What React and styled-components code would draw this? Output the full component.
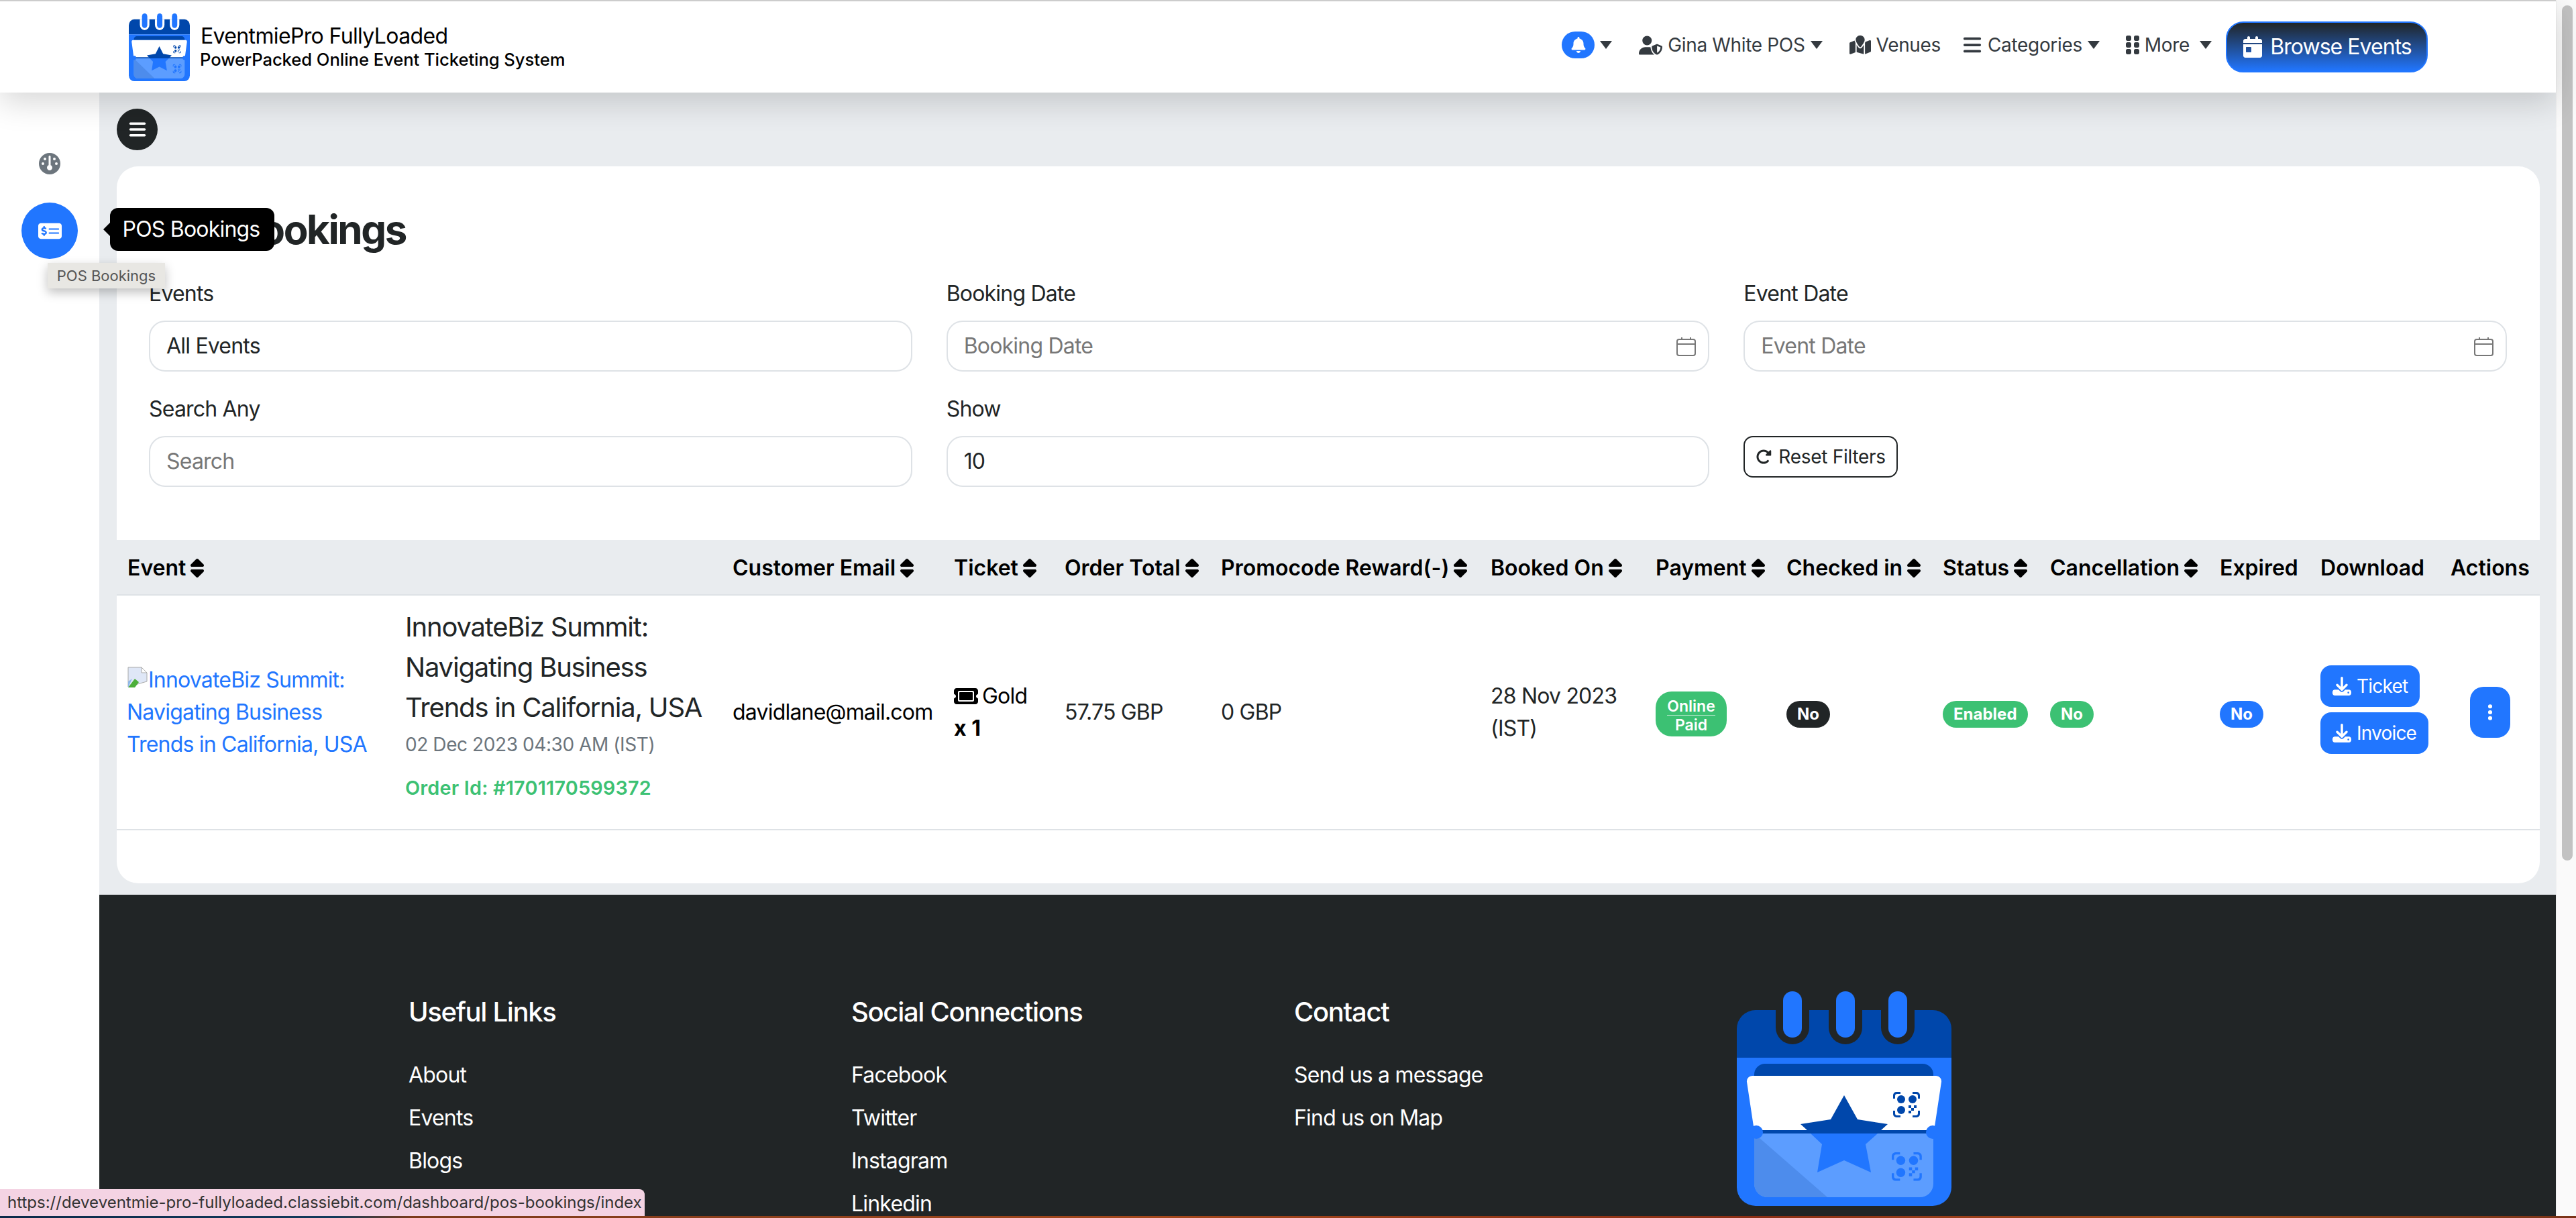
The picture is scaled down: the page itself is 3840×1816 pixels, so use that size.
import React from 'react';
import styled, { createGlobalStyle } from 'styled-components';
import {
  FaBars,
  FaBell,
  FaCalendarDay,
  FaDownload,
  FaEllipsisVertical,
  FaGauge,
  FaGripVertical,
  FaMapLocation,
  FaMoneyCheckDollar,
  FaRotateRight,
  FaSort,
  FaTicket,
  FaUserShield,
} from 'react-icons/fa6';

const BLUE = '#2176ff';
const NAVY = '#0047ab';
const GREEN = '#3cc173';
const DARK = '#212526';

const GlobalStyle = createGlobalStyle`
  html, body { margin: 0; padding: 0; height: 100%; overflow: hidden; }
  body { font-family: Inter, "Liberation Sans", sans-serif; font-size: 32px; line-height: 48px; letter-spacing: -0.025em; color: ${DARK}; }
  * { box-sizing: border-box; }
`;

const Page = styled.div`
  position: relative;
  display: flex;
  height: 1816px;
  overflow: hidden;
  background: #fff;
`;
const Content = styled.div`
  flex: 1;
  min-width: 0;
  display: flex;
  flex-direction: column;
`;
const ScrollLane = styled.div`
  width: 30px;
  padding: 8px 6px 0 8px;
  background: #fafafa;
  border-left: 1px solid #f0f0f0;
`;
const ScrollThumb = styled.div`
  width: 16px;
  height: 1275px;
  border-radius: 8px;
  background: #c2c2c2;
`;

const Navbar = styled.header`
  position: relative;
  z-index: 2;
  flex: none;
  height: 138px;
  padding: 0 191px 0 192px;
  display: flex;
  align-items: center;
  background: #fff;
  border-top: 2px solid #ccc;
  box-shadow: 0 14px 44px rgba(0, 0, 0, 0.16);
`;
const Brand = styled.div`
  display: flex;
  align-items: center;
  gap: 16px;
  color: #000;
`;
const BrandText = styled.div`
  display: flex;
  flex-direction: column;
  padding-top: 2px;
`;
const BrandName = styled.span`
  font-size: 32px;
  line-height: 36px;
  letter-spacing: -0.02em;
`;
const BrandTag = styled.span`
  font-size: 25.6px;
  line-height: 34px;
  font-weight: 500;
  letter-spacing: -0.002em;
  margin-left: -1px;
`;
const NavMenu = styled.nav`
  margin-left: auto;
  display: flex;
  align-items: center;
`;
const NavItem = styled.a`
  display: flex;
  align-items: center;
  gap: 8px;
  margin-left: ${(p) => p.$ml || 0}px;
  margin-top: -6px;
  font-size: 28px;
  line-height: 40px;
  letter-spacing: -0.012em;
  color: #343a40;
  svg { font-size: ${(p) => p.$icon || 28}px; flex: none; }
`;
const GripIcon = styled(FaGripVertical)`
  width: 20px;
  height: 32px;
`;
const Caret = styled.i`
  display: block;
  width: 0;
  height: 0;
  margin-left: ${(p) => p.$ml || 0}px;
  border-top: 12px solid #343a40;
  border-left: 9px solid transparent;
  border-right: 9px solid transparent;
`;
const BellPill = styled.span`
  width: 49px;
  height: 40px;
  border-radius: 20px;
  display: flex;
  align-items: center;
  justify-content: center;
  color: #fff;
  background: ${BLUE};
  svg { font-size: 24px; }
`;
const BrowseButton = styled.a`
  width: 301px;
  height: 76px;
  margin-left: 21px;
  display: flex;
  align-items: center;
  justify-content: center;
  gap: 10px;
  border: 2px solid ${BLUE};
  border-radius: 26px;
  color: #fff;
  font-size: 32px;
  letter-spacing: -0.03em;
  svg { font-size: 32px; }
  background: linear-gradient(180deg, ${DARK}, ${BLUE});
`;

const Body = styled.div`
  flex: 1;
  min-height: 0;
  display: flex;
`;
const Sidebar = styled.aside`
  flex: none;
  width: 148px;
  padding-top: 64px;
  display: flex;
  flex-direction: column;
  align-items: center;
  background: #fff;
`;
const SideIcon = styled.a`
  width: 84px;
  height: 84px;
  border-radius: 50%;
  display: flex;
  align-items: center;
  justify-content: center;
  font-size: ${(p) => (p.$active ? 35 : 32)}px;
  color: ${(p) => (p.$active ? '#fff' : '#6c757d')};
  background: ${(p) => (p.$active ? BLUE : 'transparent')};
  & + & { margin-top: 16px; }
`;
const Column = styled.div`
  flex: 1;
  min-width: 0;
  display: flex;
  flex-direction: column;
`;
const Main = styled.main`
  flex: none;
  padding: 24px 24px 17px 26px;
  background: #e9ecef;
`;
const MenuToggle = styled.button`
  display: flex;
  align-items: center;
  justify-content: center;
  width: 61px;
  height: 62px;
  margin-bottom: 24px;
  padding: 0;
  border: 0;
  border-radius: 50%;
  background: ${DARK};
  color: #fff;
  font-size: 28px;
`;
const Card = styled.section`
  background: #fff;
  border-radius: 32px;
  overflow: hidden;
  padding-bottom: 79px;
`;
const CardHead = styled.div`
  padding: 56px 49px 79px 48px;
`;
const Title = styled.h1`
  margin: 0 0 34px;
  font-size: 60px;
  line-height: 76px;
  font-weight: 700;
  letter-spacing: -2.4px;
`;
const FilterGrid = styled.div`
  display: grid;
  grid-template-columns: repeat(3, 1fr);
  column-gap: 51px;
  row-gap: 32px;
`;
const Label = styled.div`
  height: 48px;
  margin-bottom: 16px;
`;
const InputBox = styled.div`
  height: 76px;
  display: flex;
  align-items: center;
  padding: 0 18px 0 24px;
  border: 2px solid #dee2e6;
  border-radius: 24px;
  background: #fff;
`;
const Field = styled.input`
  flex: 1;
  min-width: 0;
  border: 0;
  outline: 0;
  padding: 0;
  background: none;
  font: inherit;
  letter-spacing: inherit;
  color: ${DARK};
  &::placeholder { color: #777; opacity: 1; }
`;
const ResetButton = styled.button`
  display: flex;
  align-items: center;
  gap: 10px;
  width: 230px;
  height: 62px;
  margin-top: 64px;
  padding: 0 16px;
  border: 2px solid ${DARK};
  border-radius: 14px;
  background: #fff;
  color: ${DARK};
  font: inherit;
  font-size: 28px;
  letter-spacing: -0.01em;
  white-space: nowrap;
  svg { font-size: 24px; flex: none; }
`;

const Table = styled.table`
  width: 100%;
  table-layout: fixed;
  border-collapse: collapse;
`;
const Th = styled.th`
  height: 82px;
  padding: 2px 0 0 16px;
  text-align: left;
  font-weight: 600;
  letter-spacing: 0;
  white-space: nowrap;
  color: #000;
  background: #e9ecef;
  border-bottom: 2px solid #dee2e6;
  svg { width: 20px; height: 32px; margin-left: 7px; vertical-align: -5px; }
`;
const Td = styled.td`
  height: 350px;
  padding: 0 16px;
  vertical-align: middle;
  color: ${(p) => p.$color || DARK};
  text-align: ${(p) => p.$align || 'left'};
  border-bottom: 2px solid #dee2e6;
`;
const EventLink = styled.a`
  display: block;
  max-width: 372px;
  margin-left: -1px;
  color: ${BLUE};
  svg { width: 32px; height: 32px; vertical-align: -1px; }
`;
const EventInfo = styled.div`
  padding-bottom: 24px;
`;
const EventName = styled.div`
  font-size: 40px;
  line-height: 60px;
  letter-spacing: -0.03em;
  color: ${DARK};
`;
const EventDate = styled.div`
  margin-top: 4px;
  font-size: 28px;
  line-height: 42px;
  letter-spacing: -0.015em;
  color: #6c757d;
`;
const OrderId = styled.div`
  margin-top: 24px;
  font-size: 28.8px;
  line-height: 40px;
  font-weight: 600;
  letter-spacing: 0.2px;
  color: ${GREEN};
`;
const TicketName = styled.div`
  display: flex;
  align-items: center;
  gap: 6px;
  color: #000;
  svg { font-size: 36px; flex: none; }
`;
const TicketQty = styled.div`
  font-weight: 700;
  letter-spacing: 0;
  color: #000;
`;
const Badge = styled.span`
  display: inline-flex;
  align-items: center;
  height: 40px;
  margin-top: 6px;
  padding: 0 16px;
  border-radius: 20px;
  font-size: 24px;
  line-height: 1;
  font-weight: 700;
  letter-spacing: 0;
  color: #fff;
  background: ${(p) => p.$bg};
`;
const PayBadge = styled.span`
  display: inline-flex;
  flex-direction: column;
  align-items: center;
  width: 106px;
  height: 67px;
  padding-top: 9px;
  border-radius: 24px;
  font-size: 23px;
  line-height: 26px;
  font-weight: 600;
  letter-spacing: 0;
  color: #fff;
  background: ${GREEN};
  b { font-weight: 600; border-bottom: 1px solid rgba(255, 255, 255, 0.6); }
  span { margin-top: 1px; }
`;
const ButtonStack = styled.div`
  display: flex;
  flex-direction: column;
  align-items: flex-start;
  gap: 8px;
  margin-bottom: 8px;
`;
const DownloadButton = styled.a`
  display: flex;
  align-items: center;
  gap: 8px;
  height: 62px;
  padding: 0 18px;
  border-radius: 16px;
  color: #fff;
  background: ${BLUE};
  font-size: 28px;
  svg { font-size: 28px; }
`;
const ActionButton = styled.button`
  display: inline-flex;
  align-items: center;
  justify-content: center;
  width: 60px;
  height: 76px;
  padding: 0;
  border: 0;
  border-radius: 20px;
  color: #fff;
  background: ${BLUE};
  font-size: 28px;
`;

const Footer = styled.footer`
  flex: 1;
  min-height: 0;
  padding: 144px 0 0 461px;
  display: grid;
  grid-template-columns: repeat(4, 660px);
  align-content: start;
  color: #fff;
  background: ${DARK};
`;
const FooterCol = styled.div`
  display: flex;
  flex-direction: column;
`;
const FooterHead = styled.h5`
  margin: 7px 0 46px;
  font-size: 40px;
  line-height: 48px;
  font-weight: 500;
  letter-spacing: -0.033em;
`;
const FooterLink = styled.a`
  height: 64px;
  line-height: 48px;
  color: #fff;
`;

const Tooltip = styled.div`
  position: absolute;
  left: 164px;
  top: 310px;
  z-index: 5;
  width: 245px;
  height: 64px;
  padding-right: 3px;
  display: flex;
  align-items: center;
  justify-content: center;
  border-radius: 12px;
  color: #fff;
  background: #000;
  font-size: 32px;
  &::before {
    content: '';
    position: absolute;
    left: -10px;
    top: 22px;
    border-top: 10px solid transparent;
    border-bottom: 10px solid transparent;
    border-right: 10px solid #000;
  }
`;
const NativeTip = styled.div`
  position: absolute;
  left: 71px;
  top: 392px;
  z-index: 6;
  width: 175px;
  height: 38px;
  display: flex;
  align-items: center;
  justify-content: center;
  font-size: 22px;
  letter-spacing: 0;
  color: #555;
  background: #e8e7e3;
  box-shadow: 0 6px 16px rgba(0, 0, 0, 0.25);
`;
const StatusBar = styled.div`
  position: absolute;
  left: 0;
  bottom: 3px;
  z-index: 7;
  width: 961px;
  height: 40px;
  padding-left: 11px;
  display: flex;
  align-items: center;
  white-space: nowrap;
  font-size: 24px;
  letter-spacing: 0;
  color: #333;
  background: #f4d3e3;
  border-top-right-radius: 8px;
`;
const WallpaperEdge = styled.div`
  position: absolute;
  left: 0;
  right: 0;
  bottom: 0;
  z-index: 8;
  height: 3px;
  background: linear-gradient(90deg, #0d2a4a 0%, #123a5c 13%, #7c3a1c 16%, #a4481c 45%, #8c2f16 68%, #a9501e 85%, #7a3318 100%);
`;

function QrMark({ x, y, s, fill }) {
  return (
    <g transform={`translate(${x} ${y}) scale(${s})`} fill={fill}>
      <path d="M0 10V5a5 5 0 0 1 5-5h6v3H6a3 3 0 0 0-3 3v4zM40 10V5a5 5 0 0 0-5-5h-6v3h5a3 3 0 0 1 3 3v4zM0 28v5a5 5 0 0 0 5 5h6v-3H6a3 3 0 0 1-3-3v-4zM40 28v5a5 5 0 0 1-5 5h-6v-3h5a3 3 0 0 0 3-3v-4z" />
      <circle cx="12" cy="11" r="6" />
      <circle cx="29" cy="11" r="6" />
      <circle cx="12" cy="27" r="6" />
      <path d="M23 20h4v4h-4zM31 20h4v4h-4zM27 24h4v4h-4zM23 28h4v4h-4z" />
    </g>
  );
}

function Logo({ width, height, hole }) {
  return (
    <svg width={width} height={height} viewBox="0 0 320 320" preserveAspectRatio="none">
      <path d="M0 99V56a28 28 0 0 1 28-28h264a28 28 0 0 1 28 28v43z" fill={NAVY} />
      <path d="M0 99h320v193a28 28 0 0 1-28 28H28a28 28 0 0 1-28-28z" fill={BLUE} />
      {[83, 162, 240].map((cx) => (
        <g key={cx}>
          <path d={`M${cx - 25} 28v26a25 25 0 0 0 50 0V28z`} fill={hole} />
          <rect x={cx - 14} y="0" width="28" height="69" rx="14" fill={BLUE} />
        </g>
      ))}
      <path d="M26 126v-2a16 16 0 0 1 16-16h235a16 16 0 0 1 16 16v2z" fill={NAVY} />
      <path d="M23 126h274a8 8 0 0 1 8 9l-11 73H26L15 135a8 8 0 0 1 8-9z" fill="#fff" />
      <path d="M26 212h267v75a20 20 0 0 1-20 20H46a20 20 0 0 1-20-20z" fill="#5c9dff" />
      <path d="M26 212l109 95H46a20 20 0 0 1-20-20z" fill="#4d8cec" />
      <rect x="26" y="207" width="267" height="5" fill={NAVY} />
      <path d="M160 155l20 36 45 7-11 10v4H106v-4l-11-10 45-7z" fill={NAVY} />
      <path d="M110 212h100l-18 16 8 42-40-18-40 18 7-42z" fill={BLUE} />
      <circle cx="29" cy="210" r="10" fill={BLUE} />
      <circle cx="292" cy="210" r="10" fill={BLUE} />
      <QrMark x={233} y={150} s={1} fill={NAVY} />
      <QrMark x={231} y={240} s={1.12} fill={BLUE} />
    </svg>
  );
}

const BrokenImage = () => (
  <svg viewBox="0 0 32 32">
    <path d="M2 1h20l8 8v13L2 30z" fill="#dfe7f7" stroke="#a9a9a9" strokeWidth="1" />
    <path d="M22 1v8h8z" fill="#fff" stroke="#a9a9a9" strokeWidth="1" />
    <path d="M2 31l10-13 6 5-6 8z" fill="#4caf3a" />
    <path d="M2 31V22l6-4-6 13z" fill="#8fb8e8" />
  </svg>
);

const CalendarGlyph = () => (
  <svg width="29" height="29" viewBox="0 0 29 29" fill="none" stroke="#777" strokeWidth="2">
    <rect x="1" y="4" width="27" height="24" rx="3" />
    <path d="M1 11h27M8 1v4M21 1v4" />
  </svg>
);

const colWidths = [414, 488, 330, 165, 233, 402, 246, 195, 233, 160, 253, 150, 194, 149];

const headers = [
  ['Event', true, 2],
  ['Customer Email', true],
  ['Ticket', true],
  ['Order Total', true],
  ['Promocode Reward(-)', true],
  ['Booked On', true],
  ['Payment', true],
  ['Checked in', true],
  ['Status', true],
  ['Cancellation', true],
  ['Expired'],
  ['Download'],
  ['Actions'],
];

const footerCols = [
  ['Useful Links', ['About', 'Events', 'Blogs']],
  ['Social Connections', ['Facebook', 'Twitter', 'Instagram', 'Linkedin']],
  ['Contact', ['Send us a message', 'Find us on Map']],
];

export default function App() {
  return (
    <Page>
      <GlobalStyle />
      <Content>
        <Navbar>
          <Brand>
            <Logo width={91} height={101} hole="#fff" />
            <BrandText>
              <BrandName>EventmiePro FullyLoaded</BrandName>
              <BrandTag>PowerPacked Online Event Ticketing System</BrandTag>
            </BrandText>
          </Brand>
          <NavMenu>
            <NavItem>
              <BellPill><FaBell /></BellPill>
              <Caret />
            </NavItem>
            <NavItem $ml={40} $icon={35}>
              <FaUserShield />
              Gina White POS
              <Caret />
            </NavItem>
            <NavItem $ml={40} $icon={32}>
              <FaMapLocation />
              Venues
            </NavItem>
            <NavItem $ml={32} $icon={30}>
              <FaBars />
              Categories
              <Caret />
            </NavItem>
            <NavItem $ml={39}>
              <GripIcon />
              More
              <Caret $ml={7} />
            </NavItem>
            <BrowseButton>
              <FaCalendarDay />
              Browse Events
            </BrowseButton>
          </NavMenu>
        </Navbar>
        <Body>
          <Sidebar>
            <SideIcon><FaGauge /></SideIcon>
            <SideIcon $active><FaMoneyCheckDollar /></SideIcon>
          </Sidebar>
          <Column>
            <Main>
              <MenuToggle><FaBars /></MenuToggle>
              <Card>
                <CardHead>
                  <Title>POS Bookings</Title>
                  <FilterGrid>
                    <div>
                      <Label>Events</Label>
                      <InputBox><Field readOnly value="All Events" /></InputBox>
                    </div>
                    <div>
                      <Label>Booking Date</Label>
                      <InputBox><Field readOnly placeholder="Booking Date" /><CalendarGlyph /></InputBox>
                    </div>
                    <div>
                      <Label>Event Date</Label>
                      <InputBox><Field readOnly placeholder="Event Date" /><CalendarGlyph /></InputBox>
                    </div>
                    <div>
                      <Label>Search Any</Label>
                      <InputBox><Field readOnly placeholder="Search" /></InputBox>
                    </div>
                    <div>
                      <Label>Show</Label>
                      <InputBox><Field readOnly value="10" /></InputBox>
                    </div>
                    <div>
                      <ResetButton><FaRotateRight />Reset Filters</ResetButton>
                    </div>
                  </FilterGrid>
                </CardHead>
                <Table>
                  <colgroup>
                    {colWidths.map((w, i) => <col key={i} width={w} />)}
                  </colgroup>
                  <thead>
                    <tr>
                      {headers.map(([label, sortable, span]) => (
                        <Th key={label} colSpan={span}>{label}{sortable && <FaSort />}</Th>
                      ))}
                    </tr>
                  </thead>
                  <tbody>
                    <tr>
                      <Td>
                        <EventLink><BrokenImage />InnovateBiz Summit: Navigating Business Trends in California, USA</EventLink>
                      </Td>
                      <Td>
                        <EventInfo>
                          <EventName>InnovateBiz Summit: Navigating Business Trends in California, USA</EventName>
                          <EventDate>02 Dec 2023 04:30 AM (IST)</EventDate>
                          <OrderId>Order Id: #1701170599372</OrderId>
                        </EventInfo>
                      </Td>
                      <Td $color="#000">davidlane@mail.com</Td>
                      <Td>
                        <TicketName><FaTicket />Gold</TicketName>
                        <TicketQty>x 1</TicketQty>
                      </Td>
                      <Td>57.75 GBP</Td>
                      <Td>0 GBP</Td>
                      <Td>28 Nov 2023 (IST)</Td>
                      <Td><PayBadge><b>Online</b><span>Paid</span></PayBadge></Td>
                      <Td><Badge $bg={DARK}>No</Badge></Td>
                      <Td><Badge $bg={GREEN}>Enabled</Badge></Td>
                      <Td><Badge $bg={GREEN}>No</Badge></Td>
                      <Td><Badge $bg={BLUE}>No</Badge></Td>
                      <Td>
                        <ButtonStack>
                          <DownloadButton><FaDownload />Ticket</DownloadButton>
                          <DownloadButton><FaDownload />Invoice</DownloadButton>
                        </ButtonStack>
                      </Td>
                      <Td $align="center"><ActionButton><FaEllipsisVertical /></ActionButton></Td>
                    </tr>
                  </tbody>
                </Table>
              </Card>
            </Main>
            <Footer>
              {footerCols.map(([head, links]) => (
                <FooterCol key={head}>
                  <FooterHead>{head}</FooterHead>
                  {links.map((l) => <FooterLink key={l}>{l}</FooterLink>)}
                </FooterCol>
              ))}
              <FooterCol>
                <Logo width={320} height={320} hole={DARK} />
              </FooterCol>
            </Footer>
          </Column>
        </Body>
      </Content>
      <ScrollLane><ScrollThumb /></ScrollLane>
      <Tooltip>POS Bookings</Tooltip>
      <NativeTip>POS Bookings</NativeTip>
      <StatusBar>https://deveventmie-pro-fullyloaded.classiebit.com/dashboard/pos-bookings/index</StatusBar>
      <WallpaperEdge />
    </Page>
  );
}
